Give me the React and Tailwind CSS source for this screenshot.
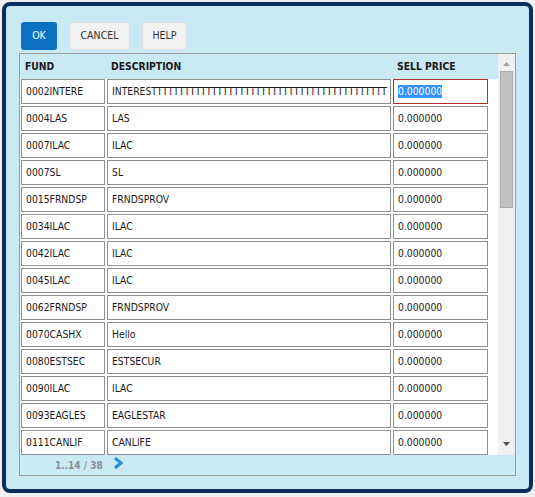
const ROWS = [
  ["0002INTERE", "INTEREST" + "T".repeat(42)],
  ["0004LAS", "LAS"],
  ["0007ILAC", "ILAC"],
  ["0007SL", "SL"],
  ["0015FRNDSP", "FRNDSPROV"],
  ["0034ILAC", "ILAC"],
  ["0042ILAC", "ILAC"],
  ["0045ILAC", "ILAC"],
  ["0062FRNDSP", "FRNDSPROV"],
  ["0070CASHX", "Hello"],
  ["0080ESTSEC", "ESTSECUR"],
  ["0090ILAC", "ILAC"],
  ["0093EAGLES", "EAGLESTAR"],
  ["0111CANLIF", "CANLIFE"],
];

function Cell({ w, children, selected }) {
  return (
    <div
      className={`h-[25px] flex items-center overflow-hidden whitespace-nowrap border bg-white pl-[4px] ${w} ${
        selected ? "border-[#b3302c]" : "border-[#8f8f8f]"
      }`}
    >
      {children}
    </div>
  );
}

export default function App() {
  return (
    <div
      className="w-[535px] h-[497px] bg-[#eef0f2] pt-[2px] pl-[2px] text-[#1a1a1a]"
      style={{ fontFamily: '"DejaVu Sans Condensed", "Liberation Sans", Arial, sans-serif' }}
    >
      <div className="w-[531px] h-[491px] rounded-lg border-4 border-[#0d2f5e] bg-[#c9e9f5] pl-[13px] pt-[16px]">
        {/* toolbar */}
        <div className="flex gap-[12px] ml-[2px]">
          <button className="w-[36px] h-[28px] rounded-[3px] bg-[#0b6fc4] text-[10.5px] text-white">
            OK
          </button>
          <button className="w-[61px] h-[28px] rounded-[3px] border border-[#dcdfe2] bg-[#f2f2f2] text-[10.5px] text-[#333]">
            CANCEL
          </button>
          <button className="w-[45px] h-[28px] rounded-[3px] border border-[#dcdfe2] bg-[#f2f2f2] text-[10.5px] text-[#333]">
            HELP
          </button>
        </div>

        {/* grid */}
        <div className="mt-[3px] w-[497px] h-[423px] border border-[#9c9c9c] flex flex-col">
          <div className="flex h-[401px]">
            <div className="w-[478px] bg-white overflow-hidden">
              <div className="h-[25px] flex gap-[2px] pl-[1px] bg-[#c9e9f5] text-[10.3px] font-bold items-center">
                <div className="w-[84px] pl-[4px]">FUND</div>
                <div className="w-[284px] pl-[4px]">DESCRIPTION</div>
                <div className="w-[95px] pl-[4px]">SELL PRICE</div>
              </div>
              {ROWS.map(([fund, desc], i) => (
                <div key={i} className="h-[27px] flex gap-[2px] pl-[1px] text-[10.3px]">
                  <Cell w="w-[84px]">{fund}</Cell>
                  <Cell w="w-[284px]">{desc}</Cell>
                  <Cell w="w-[95px]" selected={i === 0}>
                    {i === 0 ? (
                      <span className="bg-[#3390ff] text-white leading-[13px]">0.000000</span>
                    ) : (
                      "0.000000"
                    )}
                  </Cell>
                </div>
              ))}
            </div>
            {/* scrollbar */}
            <div className="w-[17px] bg-[#f0f0f0] flex flex-col items-center">
              <svg width="9" height="14" viewBox="0 0 9 14" className="mt-[3px]">
                <path d="M1 9 L4.5 5 L8 9 Z" fill="#a3a3a3" />
              </svg>
              <div className="w-[13px] h-[137px] bg-[#c1c1c1] border border-[#a8a8a8]" />
              <div className="flex-1" />
              <svg width="9" height="14" viewBox="0 0 9 14" className="mb-[4px]">
                <path d="M1 5 L8 5 L4.5 9 Z" fill="#505050" />
              </svg>
            </div>
          </div>
          {/* pager */}
          <div className="flex-1 bg-[#c9e9f5] flex items-center">
            <span className="ml-[35px] text-[10px] font-bold text-[#8a9096]">1..14 / 38</span>
            <svg width="12" height="12" viewBox="0 0 12 12" className="ml-[10px] -mt-[4px]">
              <path d="M2 1 L8 6 L2 11" fill="none" stroke="#1f8fd2" strokeWidth="3" />
            </svg>
          </div>
        </div>
      </div>
    </div>
  );
}
